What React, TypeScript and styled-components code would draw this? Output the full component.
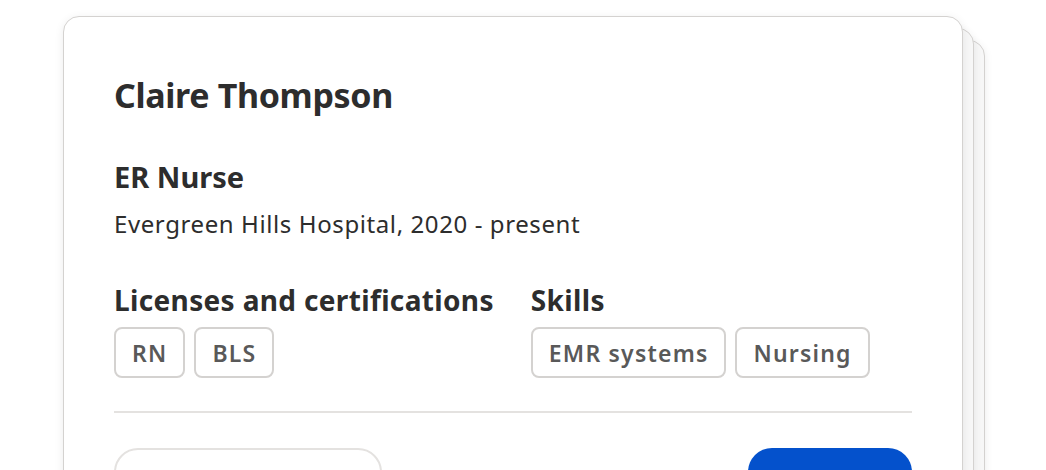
import React from 'react';
import styled, { createGlobalStyle } from 'styled-components';

const GlobalStyle = createGlobalStyle`
  html, body {
    margin: 0;
    padding: 0;
    background: #ffffff;
    overflow: hidden;
  }
  body {
    font-family: 'Noto Sans', 'Open Sans', sans-serif;
    color: #2d2d2d;
  }
`;

const Page = styled.div`
  width: 1046px;
  height: 470px;
  overflow: hidden;
  padding: 16px 0 0 63px;
  box-sizing: border-box;
`;

const Stack = styled.div`
  position: relative;
  width: 900px;
`;

const BackCard = styled.div<{ $offset: number }>`
  position: absolute;
  top: ${(p) => p.$offset * 12}px;
  left: ${(p) => p.$offset * 11}px;
  width: 900px;
  height: 600px;
  box-sizing: border-box;
  background: #f7f7f7;
  border: 1.5px solid #d4d2d0;
  border-radius: 16px;
  box-shadow: 0 2px 8px rgba(0, 0, 0, 0.08);
`;

const Card = styled.div`
  position: relative;
  box-sizing: border-box;
  width: 900px;
  min-height: 600px;
  background: #ffffff;
  border: 1.5px solid #d4d2d0;
  border-radius: 16px;
  box-shadow: 0 2px 10px rgba(0, 0, 0, 0.08);
  padding: 56px 50px 0 50px;
`;

const Name = styled.h1`
  margin: 0;
  font-size: 34px;
  line-height: 44px;
  font-weight: 700;
  letter-spacing: -0.35px;
`;

const Role = styled.h2`
  margin: 42px 0 0;
  font-size: 29px;
  line-height: 36px;
  font-weight: 700;
`;

const Employer = styled.p`
  margin: 13px 0 0;
  font-size: 24px;
  line-height: 32px;
  font-weight: 400;
  letter-spacing: 0.6px;
`;

const Sections = styled.div`
  display: flex;
  gap: 37px;
  margin-top: 43px;
`;

const Section = styled.div`
  display: flex;
  flex-direction: column;
`;

const SectionTitle = styled.h3`
  margin: 0;
  font-size: 28px;
  line-height: 34px;
  font-weight: 700;
  letter-spacing: 0.35px;
`;

const Tags = styled.div`
  display: flex;
  gap: 9px;
  margin-top: 10px;
`;

const Tag = styled.span`
  box-sizing: border-box;
  height: 51px;
  padding: 0 16px;
  display: inline-flex;
  align-items: center;
  border: 2px solid #d4d2d0;
  border-radius: 8px;
  font-size: 23px;
  font-weight: 600;
  letter-spacing: 1.2px;
  color: #595959;
`;

const Divider = styled.hr`
  margin: 33px 0 0;
  border: 0;
  border-top: 2px solid #e4e2e0;
`;

const Actions = styled.div`
  display: flex;
  justify-content: space-between;
  margin-top: 35px;
`;

const Button = styled.button<{ $primary?: boolean }>`
  box-sizing: border-box;
  height: 56px;
  width: ${(p) => (p.$primary ? '164px' : '268px')};
  border-radius: 24px;
  border: ${(p) => (p.$primary ? '0' : '2px solid #e4e2e0')};
  background: ${(p) => (p.$primary ? '#0451cc' : '#ffffff')};
  font-family: inherit;
`;

export default function App() {
  return (
    <Page>
      <GlobalStyle />
      <Stack>
        <BackCard $offset={2} />
        <BackCard $offset={1} />
        <Card>
          <Name>Claire Thompson</Name>
          <Role>ER Nurse</Role>
          <Employer>Evergreen Hills Hospital, 2020 - present</Employer>
          <Sections>
            <Section>
              <SectionTitle>Licenses and certifications</SectionTitle>
              <Tags>
                <Tag>RN</Tag>
                <Tag>BLS</Tag>
              </Tags>
            </Section>
            <Section>
              <SectionTitle>Skills</SectionTitle>
              <Tags>
                <Tag>EMR systems</Tag>
                <Tag>Nursing</Tag>
              </Tags>
            </Section>
          </Sections>
          <Divider />
          <Actions>
            <Button aria-label="Secondary action" />
            <Button $primary aria-label="Primary action" />
          </Actions>
        </Card>
      </Stack>
    </Page>
  );
}
